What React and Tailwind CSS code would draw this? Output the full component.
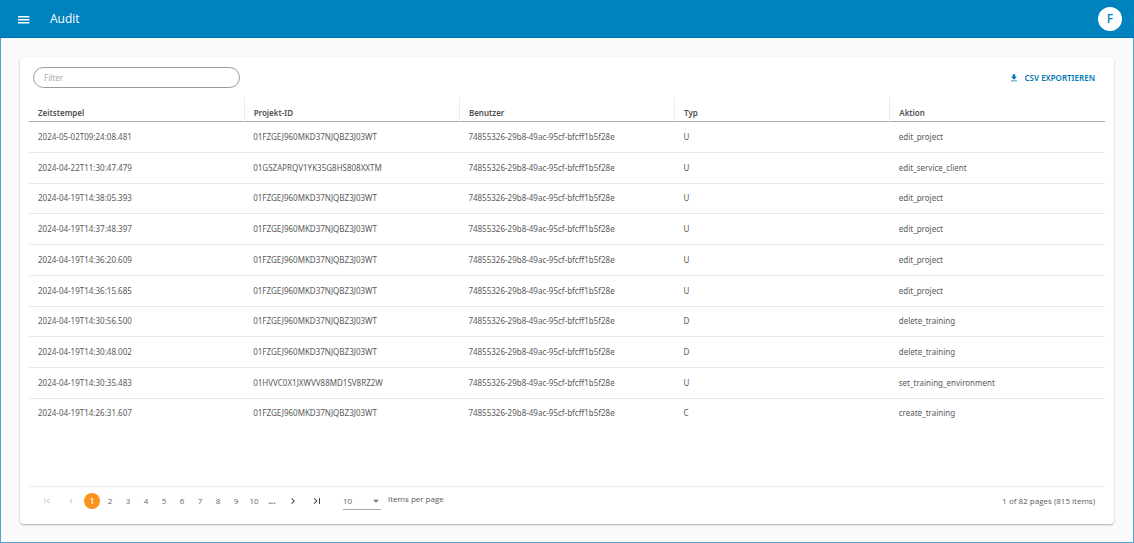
import { useState } from 'react';

const columns = ['Zeitstempel', 'Projekt-ID', 'Benutzer', 'Typ', 'Aktion'];

const PROJECT = '01FZGEJ960MKD37NJQBZ3J03WT';
const USER = '74855326-29b8-49ac-95cf-bfcff1b5f28e';

const entries = [
  ['2024-05-02T09:24:08.481', PROJECT, USER, 'U', 'edit_project'],
  ['2024-04-22T11:30:47.479', '01GSZAPRQV1YK35G8HS808XXTM', USER, 'U', 'edit_service_client'],
  ['2024-04-19T14:38:05.393', PROJECT, USER, 'U', 'edit_project'],
  ['2024-04-19T14:37:48.397', PROJECT, USER, 'U', 'edit_project'],
  ['2024-04-19T14:36:20.609', PROJECT, USER, 'U', 'edit_project'],
  ['2024-04-19T14:36:15.685', PROJECT, USER, 'U', 'edit_project'],
  ['2024-04-19T14:30:56.500', PROJECT, USER, 'D', 'delete_training'],
  ['2024-04-19T14:30:48.002', PROJECT, USER, 'D', 'delete_training'],
  ['2024-04-19T14:30:35.483', '01HVVC0X1JXWVV88MD1SV8RZ2W', USER, 'U', 'set_training_environment'],
  ['2024-04-19T14:26:31.607', PROJECT, USER, 'C', 'create_training'],
];

const pages = [1, 2, 3, 4, 5, 6, 7, 8, 9, 10];

const icons = {
  menu: 'M3 7.5h17v2.2H3zM3 12h17v2.2H3zM3 16.5h17v2.2H3z',
  download: 'M19 9h-4V3H9v6H5l7 7 7-7zM5 18v2h14v-2H5z',
  first: 'M18.41 16.59L13.82 12l4.59-4.59L17 6l-6 6 6 6zM6 6h2v12H6z',
  prev: 'M15.41 7.41L14 6l-6 6 6 6 1.41-1.41L10.83 12z',
  next: 'M10 6L8.59 7.41 13.17 12l-4.58 4.59L10 18l6-6z',
  last: 'M5.59 7.41L10.18 12l-4.59 4.59L7 18l6-6-6-6zM16 6h2v12h-2z',
  arrow: 'M5 9l7 7 7-7z',
};

const Icon = ({ name, className }) => (
  <svg viewBox="0 0 24 24" fill="currentColor" aria-hidden="true" className={className}>
    <path d={icons[name]} />
  </svg>
);

const Header = () => (
  <header className="flex h-[38px] items-center justify-between border-b border-[#0072ad] bg-[#0082be] pl-4 pr-3 text-white">
    <div className="flex items-center gap-[18px]">
      <button type="button" aria-label="Menü" className="flex size-4 items-center justify-center">
        <Icon name="menu" className="size-4 shrink-0" />
      </button>
      <h1 className="text-[12px] leading-4">Audit</h1>
    </div>
    <button
      type="button"
      aria-label="Profil"
      className="flex size-6 items-center justify-center rounded-full bg-white text-[12px] font-semibold text-[#0082be]"
    >
      F
    </button>
  </header>
);

const AuditTable = ({ rows }) => (
  <table className="h-[331px] w-full table-fixed border-collapse text-left font-['Noto_Sans',sans-serif]">
    <thead>
      <tr className="h-6 border-b border-[#a8a8a8]">
        {columns.map((column) => (
          <th
            key={column}
            className="border-r border-[#ececec] px-[9px] pt-2 font-semibold leading-4 text-[#505050] last:border-r-0"
          >
            {column}
          </th>
        ))}
      </tr>
    </thead>
    <tbody>
      {rows.map((row) => (
        <tr key={row[0]} className="border-b border-[#e8e8e8] last:border-b-0">
          {row.map((cell, index) => (
            <td key={columns[index]} className="truncate px-[9px]">
              {cell}
            </td>
          ))}
        </tr>
      ))}
    </tbody>
  </table>
);

const Pagination = () => {
  const [page, setPage] = useState(1);

  return (
    <footer className="flex items-center justify-between border-t border-[#ebebeb] px-[10px] pt-[5px]">
      <div className="flex items-center">
        <nav aria-label="Pagination" className="flex items-center">
          <button
            type="button"
            aria-label="Erste Seite"
            disabled={page === 1}
            onClick={() => setPage(1)}
            className="flex h-4 w-4 items-center justify-center disabled:text-[#c4c4c4]"
          >
            <Icon name="first" className="size-[10px]" />
          </button>
          <button
            type="button"
            aria-label="Vorherige Seite"
            disabled={page === 1}
            onClick={() => setPage(page - 1)}
            className="ml-2 mr-1 flex h-4 w-4 items-center justify-center disabled:text-[#c4c4c4]"
          >
            <Icon name="prev" className="size-[10px]" />
          </button>
          {pages.map((number) => (
            <button
              key={number}
              type="button"
              onClick={() => setPage(number)}
              className={`mx-px flex size-4 items-center justify-center rounded-full ${
                number === page ? 'bg-[#fb9220] font-semibold text-white' : 'text-[#666]'
              }`}
            >
              {number}
            </button>
          ))}
          <span className="mx-px w-4 text-center font-bold">...</span>
          <button
            type="button"
            aria-label="Nächste Seite"
            onClick={() => setPage(page + 1)}
            className="ml-1 flex h-4 w-4 items-center justify-center text-[#444]"
          >
            <Icon name="next" className="size-3" />
          </button>
          <button
            type="button"
            aria-label="Letzte Seite"
            onClick={() => setPage(82)}
            className="ml-2 flex h-4 w-4 items-center justify-center text-[#444]"
          >
            <Icon name="last" className="size-3" />
          </button>
        </nav>
        <div className="relative ml-[18px] flex items-center">
          <select
            id="page-size"
            defaultValue="10"
            className="h-[18px] w-[38px] appearance-none border-b border-[#a8a8a8] bg-transparent text-[#666] outline-none"
          >
            <option value="10">10</option>
            <option value="20">20</option>
            <option value="50">50</option>
          </select>
          <Icon name="arrow" className="pointer-events-none absolute right-0 size-[10px] text-[#777]" />
        </div>
        <label htmlFor="page-size" className="mb-1 ml-[7px]">
          Items per page
        </label>
      </div>
      <p>1 of 82 pages (815 items)</p>
    </footer>
  );
};

export default function App() {
  const [filter, setFilter] = useState('');

  const rows = entries.filter((row) => row.some((cell) => cell.toLowerCase().includes(filter.toLowerCase())));

  return (
    <div className="flex min-h-screen flex-col bg-[#fafafa] font-['Open_Sans',sans-serif] text-[8px] leading-3 text-[#5a5a5a]">
      <Header />
      <main className="flex flex-1 flex-col border-x border-b border-[#4aa6d2] px-[19px] pb-[18px] pt-[19px]">
        <section className="flex flex-1 flex-col rounded bg-white px-[9px] pt-[10px] shadow-[0_1px_2px_rgba(0,0,0,0.3)]">
          <div className="flex h-[30px] items-start justify-between pl-1 pr-[10px] font-['Noto_Sans',sans-serif]">
            <input
              type="text"
              aria-label="Filter"
              placeholder="Filter"
              value={filter}
              onChange={(e) => setFilter(e.target.value)}
              className="h-[21px] w-[207px] rounded-full border border-[#999] px-[10px] outline-none placeholder:text-[#aaa]"
            />
            <button
              type="button"
              className="flex h-[21px] items-center gap-[6px] font-semibold text-[#0077b6]"
            >
              <Icon name="download" className="size-[10px]" />
              CSV EXPORTIEREN
            </button>
          </div>
          <AuditTable rows={rows} />
          <div className="mt-auto pb-[14px]">
            <Pagination />
          </div>
        </section>
      </main>
    </div>
  );
}
